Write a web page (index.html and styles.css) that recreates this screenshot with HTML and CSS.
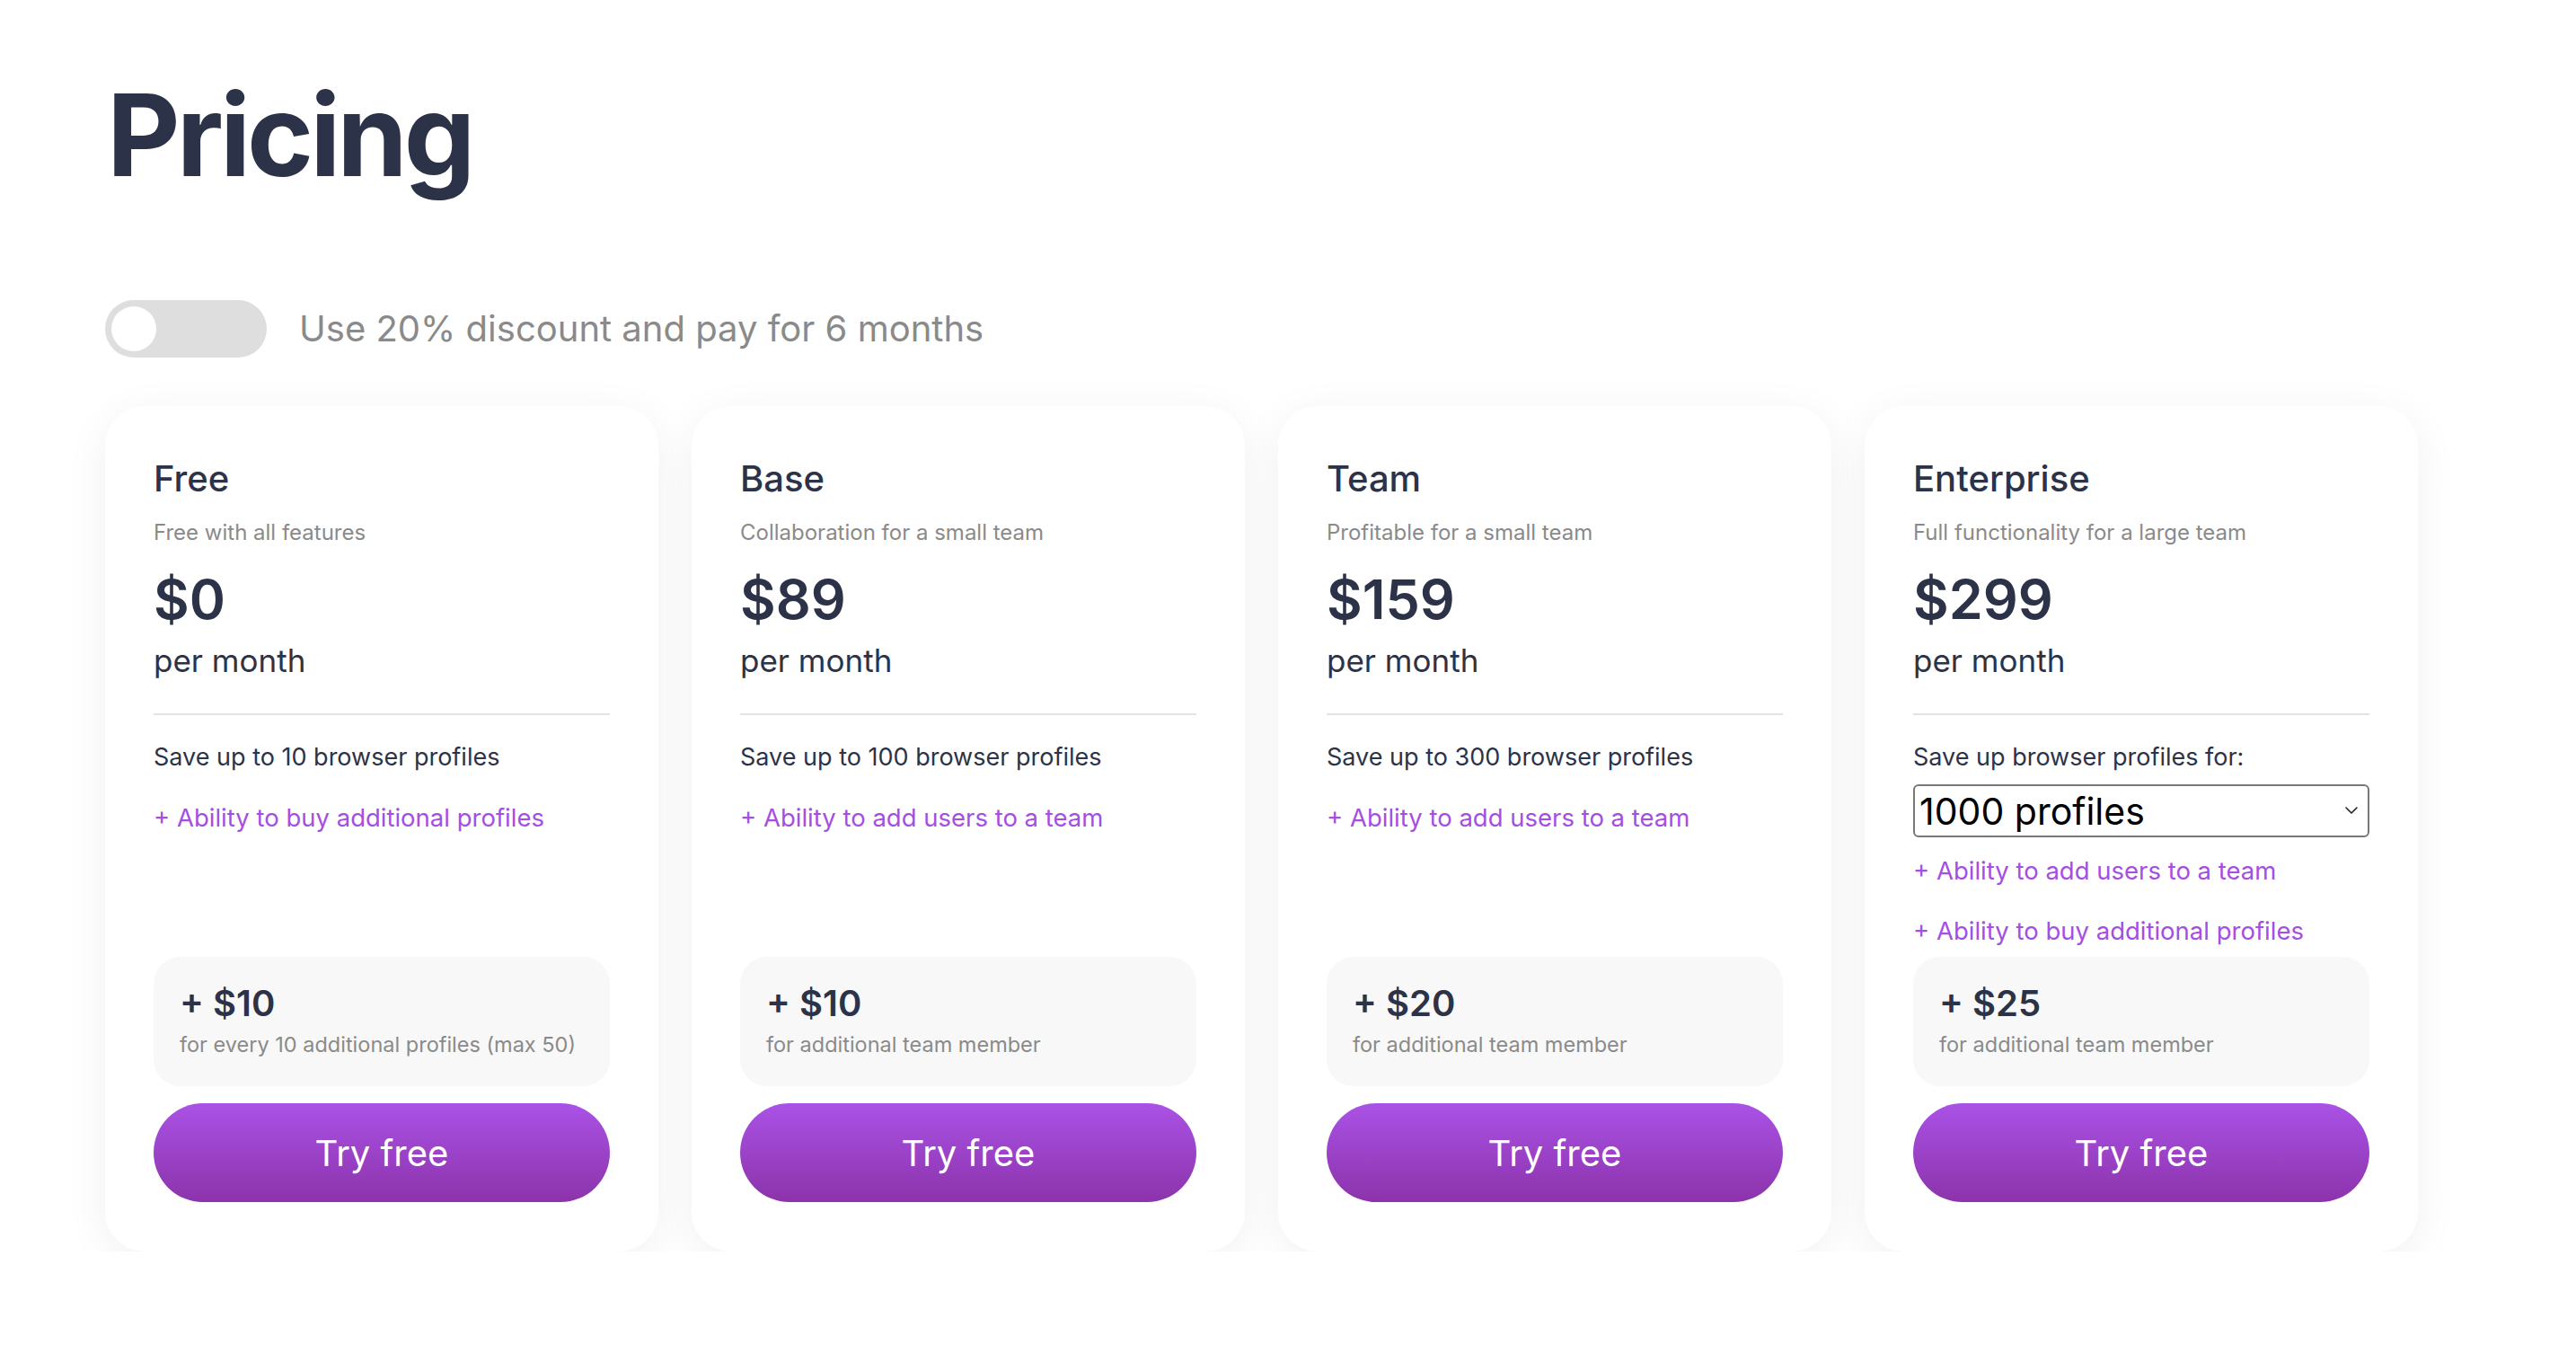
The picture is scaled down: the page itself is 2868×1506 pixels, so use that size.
FILE: index.html
```html
<!DOCTYPE html>
<html lang="en">
<head>
    <meta charset="UTF-8">
    <meta name="viewport" content="width=device-width, initial-scale=1.0">
    <title>Pricing</title>
    <link rel="stylesheet" href="styles.css">
</head>
<body>
    <div class="page">
        <h1 class="title">Pricing</h1>

        <label class="discount">
            <span class="switch"><span class="knob"></span></span>
            <span class="discount-text">Use 20% discount and pay for 6 months</span>
        </label>

        <div class="plans">
            <div class="plan">
                <div class="plan-head">
                    <div class="plan-name">Free</div>
                    <div class="plan-desc">Free with all features</div>
                    <div class="plan-price">$0</div>
                    <div class="plan-period">per month</div>
                </div>
                <div class="plan-body">
                    <div class="plan-limit">Save up to 10 browser profiles</div>
                    <div class="plan-feature">+ Ability to buy additional profiles</div>
                </div>
                <div class="addon">
                    <div class="addon-price">+ $10</div>
                    <div class="addon-note">for every 10 additional profiles (max 50)</div>
                </div>
                <button class="try-btn">Try free</button>
            </div>

            <div class="plan">
                <div class="plan-head">
                    <div class="plan-name">Base</div>
                    <div class="plan-desc">Collaboration for a small team</div>
                    <div class="plan-price">$89</div>
                    <div class="plan-period">per month</div>
                </div>
                <div class="plan-body">
                    <div class="plan-limit">Save up to 100 browser profiles</div>
                    <div class="plan-feature">+ Ability to add users to a team</div>
                </div>
                <div class="addon">
                    <div class="addon-price">+ $10</div>
                    <div class="addon-note">for additional team member</div>
                </div>
                <button class="try-btn">Try free</button>
            </div>

            <div class="plan">
                <div class="plan-head">
                    <div class="plan-name">Team</div>
                    <div class="plan-desc">Profitable for a small team</div>
                    <div class="plan-price">$159</div>
                    <div class="plan-period">per month</div>
                </div>
                <div class="plan-body">
                    <div class="plan-limit">Save up to 300 browser profiles</div>
                    <div class="plan-feature">+ Ability to add users to a team</div>
                </div>
                <div class="addon">
                    <div class="addon-price">+ $20</div>
                    <div class="addon-note">for additional team member</div>
                </div>
                <button class="try-btn">Try free</button>
            </div>

            <div class="plan">
                <div class="plan-head">
                    <div class="plan-name">Enterprise</div>
                    <div class="plan-desc">Full functionality for a large team</div>
                    <div class="plan-price">$299</div>
                    <div class="plan-period">per month</div>
                </div>
                <div class="plan-body">
                    <div class="plan-limit">Save up browser profiles for:</div>
                    <div class="select-wrap">
                        <select class="profiles-select">
                            <option>1000 profiles</option>
                            <option>2000 profiles</option>
                            <option>5000 profiles</option>
                        </select>
                        <svg class="select-arrow" width="16" height="10" viewBox="0 0 16 10">
                            <path d="M2 2l6 6 6-6" fill="none" stroke="#222" stroke-width="1.6" stroke-linecap="round" stroke-linejoin="round"/>
                        </svg>
                    </div>
                    <div class="plan-feature">+ Ability to add users to a team</div>
                    <div class="plan-feature">+ Ability to buy additional profiles</div>
                </div>
                <div class="addon">
                    <div class="addon-price">+ $25</div>
                    <div class="addon-note">for additional team member</div>
                </div>
                <button class="try-btn">Try free</button>
            </div>
        </div>
    </div>
</body>
</html>
```

FILE: styles.css
```css
* {
    margin: 0;
    padding: 0;
    box-sizing: border-box;
}

body {
    font-family: Inter, "Noto Sans", sans-serif;
    background-color: #fff;
    color: #2c3348;
}

.page {
    padding: 75px 0 0 117px;
}

.title {
    margin-left: 2px;
    font-size: 126px;
    line-height: 151px;
    font-weight: 700;
    color: #2c3348;
    letter-spacing: -4px;
}

/* discount toggle */
.discount {
    display: flex;
    align-items: center;
    gap: 36px;
    margin-top: 108px;
    cursor: pointer;
}

.switch {
    display: flex;
    width: 180px;
    height: 64px;
    padding: 7px;
    border-radius: 32px;
    background-color: #dedede;
}

.knob {
    width: 50px;
    height: 50px;
    border-radius: 50%;
    background-color: #fff;
}

.discount-text {
    font-size: 40px;
    line-height: 48px;
    color: #8a8a8a;
}

/* plan cards */
.plans {
    display: grid;
    grid-template-columns: repeat(4, 616px);
    gap: 37px;
    margin-top: 54px;
}

.plan {
    display: flex;
    flex-direction: column;
    padding: 57px 54px 55px;
    background-color: #fff;
    border-radius: 44px;
    box-shadow: 0 10px 50px rgba(0, 0, 0, 0.06);
}

.plan-head {
    padding-bottom: 37px;
    border-bottom: 2px solid #e3e3e3;
}

.plan-name {
    font-size: 40px;
    line-height: 48px;
    font-weight: 500;
}

.plan-desc {
    margin-top: 20px;
    font-size: 24px;
    line-height: 32px;
    color: #8a8a8a;
}

.plan-price {
    margin-top: 24px;
    font-size: 61px;
    line-height: 68px;
    font-weight: 600;
}

.plan-period {
    margin-top: 12px;
    font-size: 35px;
    line-height: 44px;
}

.plan-body {
    margin: 29px 0 11px;
    font-size: 27.5px;
    line-height: 36px;
}

.plan-limit {
    font-size: 27px;
}

.plan-feature {
    margin-top: 31px;
    color: #a54ee3;
}

.select-wrap {
    position: relative;
    margin-top: 12px;
}

.select-wrap + .plan-feature {
    margin-top: 19px;
}

.profiles-select {
    appearance: none;
    -webkit-appearance: none;
    display: block;
    width: 100%;
    height: 59px;
    padding: 0 50px 0 5px;
    border: 2px solid #777;
    border-radius: 6px;
    background-color: #fff;
    font-family: Inter, "Noto Sans", sans-serif;
    font-size: 41px;
    color: #000;
}

.select-arrow {
    position: absolute;
    right: 12px;
    top: 24px;
    pointer-events: none;
}

/* add-on box */
.addon {
    margin-top: auto;
    padding: 28px 20px 30px 29px;
    border-radius: 30px;
    background-color: #f8f8f8;
}

.addon-price {
    font-size: 40px;
    line-height: 48px;
    font-weight: 600;
}

.addon-note {
    margin-top: 6px;
    font-size: 23.5px;
    line-height: 32px;
    color: #8a8a8a;
    white-space: nowrap;
}

.try-btn {
    width: 100%;
    height: 110px;
    margin-top: 19px;
    border: none;
    border-radius: 55px;
    background: linear-gradient(180deg, #aa52e6 0%, #8c33ab 100%);
    color: #fff;
    font-family: Inter, "Noto Sans", sans-serif;
    font-size: 40px;
    cursor: pointer;
}

.try-btn:hover {
    background: linear-gradient(180deg, #9f48da 0%, #80299f 100%);
}
```
